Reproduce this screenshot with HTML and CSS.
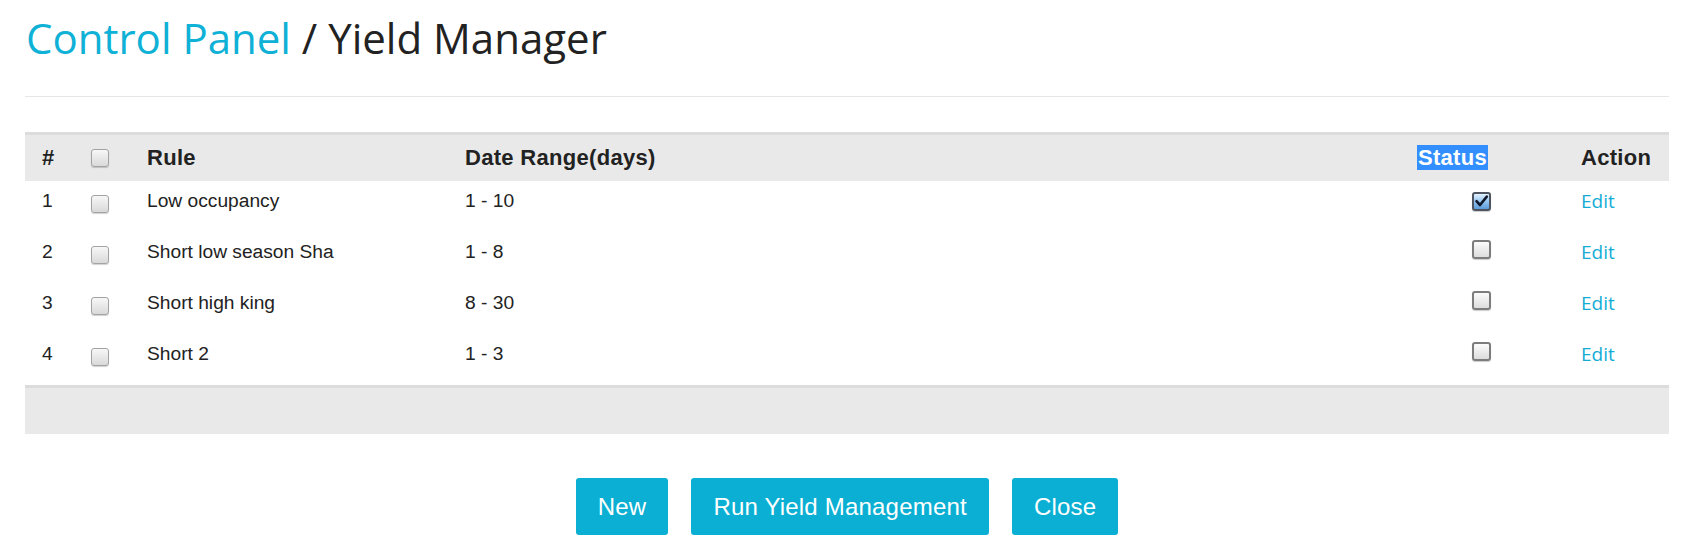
FILE: index.html
```html
<!DOCTYPE html>
<html lang="en">
<head>
<meta charset="utf-8">
<title>Yield Manager</title>
<link rel="stylesheet" href="styles.css">
</head>
<body>
<div class="page">
  <h1 class="title"><span class="crumb">Control Panel</span> / Yield Manager</h1>
  <hr class="divider">
  <table class="rules">
    <colgroup>
      <col class="w-num"><col class="w-sel"><col class="w-rule"><col class="w-range"><col class="w-status"><col class="w-action">
    </colgroup>
    <thead>
      <tr class="head">
        <th class="c-txt">#</th>
        <th class="c-txt"><span class="cb"></span></th>
        <th class="c-txt">Rule</th>
        <th class="c-txt">Date Range(days)</th>
        <th class="c-status"><span class="sel">Status</span></th>
        <th class="c-txt">Action</th>
      </tr>
    </thead>
    <tbody>
      <tr class="row">
        <td class="c-txt">1</td>
        <td class="c-txt"><span class="cb cb-row"></span></td>
        <td class="c-txt">Low occupancy</td>
        <td class="c-txt">1 - 10</td>
        <td class="c-status"><span class="sb sb-on"><svg viewBox="0 0 15 15" width="15" height="15"><path d="M2.5 7.2 L6 11 L12.8 2.6" fill="none" stroke="#10182a" stroke-width="2.6" stroke-linecap="round" stroke-linejoin="round"/></svg></span></td>
        <td class="c-txt"><a class="edit" href="#">Edit</a></td>
      </tr>
      <tr class="row">
        <td class="c-txt">2</td>
        <td class="c-txt"><span class="cb cb-row"></span></td>
        <td class="c-txt">Short low season Sha</td>
        <td class="c-txt">1 - 8</td>
        <td class="c-status"><span class="sb"></span></td>
        <td class="c-txt"><a class="edit" href="#">Edit</a></td>
      </tr>
      <tr class="row">
        <td class="c-txt">3</td>
        <td class="c-txt"><span class="cb cb-row"></span></td>
        <td class="c-txt">Short high king</td>
        <td class="c-txt">8 - 30</td>
        <td class="c-status"><span class="sb"></span></td>
        <td class="c-txt"><a class="edit" href="#">Edit</a></td>
      </tr>
      <tr class="row">
        <td class="c-txt">4</td>
        <td class="c-txt"><span class="cb cb-row"></span></td>
        <td class="c-txt">Short 2</td>
        <td class="c-txt">1 - 3</td>
        <td class="c-status"><span class="sb"></span></td>
        <td class="c-txt"><a class="edit" href="#">Edit</a></td>
      </tr>
    </tbody>
    <tfoot>
      <tr class="foot"><td colspan="6"></td></tr>
    </tfoot>
  </table>
  <div class="actions">
    <button class="btn" type="button">New</button>
    <button class="btn" type="button">Run Yield Management</button>
    <button class="btn" type="button">Close</button>
  </div>
</div>
</body>
</html>
```

FILE: styles.css
```css
html, body {
  margin: 0;
  padding: 0;
  background: #ffffff;
}

.page {
  padding: 0 26px 0 25px;
  font-family: "Liberation Sans", Arial, sans-serif;
  color: #222222;
}

.title {
  margin: 15px 0 0 1px;
  font-family: "Open Sans", "Noto Sans", sans-serif;
  font-weight: 400;
  font-size: 42px;
  line-height: 46px;
  color: #222222;
}

.crumb {
  color: #0fb1d6;
}

.divider {
  margin: 35px 0 0 0;
  border: 0;
  border-top: 1px solid #e6e6e6;
  height: 0;
}

.rules {
  width: 100%;
  margin-top: 35px;
  border-collapse: separate;
  border-spacing: 0;
  table-layout: fixed;
}

.w-num { width: 49px; }
.w-sel { width: 56px; }
.w-rule { width: 318px; }
.w-range { width: 932px; }
.w-status { width: 184px; }
.w-action { width: 105px; }

.head {
  height: 49px;
}

.head th {
  background: #e9e9e9;
  border-top: 3px solid #dcdcdc;
  font-size: 22px;
  font-weight: 700;
  letter-spacing: 0.3px;
  color: #222222;
  vertical-align: middle;
  padding-top: 0;
  padding-bottom: 0;
  line-height: 26px;
}

.c-txt {
  text-align: left;
  padding-left: 17px;
  padding-right: 0;
}

.c-status {
  text-align: right;
  padding-left: 0;
  padding-right: 76px;
}

.sel {
  background: #338fff;
  color: #ffffff;
  padding: 0 1px;
}

.row {
  height: 51px;
}

.row td {
  vertical-align: top;
  padding-top: 9px;
  padding-bottom: 0;
  font-size: 19.2px;
  line-height: 22px;
  color: #222222;
}

.cb {
  display: block;
  width: 16px;
  height: 16px;
  border: 1px solid #a3a3a3;
  border-radius: 3px;
  background: linear-gradient(#f7f7f7, #d9d9d9);
  box-shadow: 0 1px 1px rgba(0, 0, 0, 0.18);
}

.cb-row {
  margin-top: 5px;
}

.sb {
  display: inline-block;
  vertical-align: top;
  box-sizing: border-box;
  width: 19px;
  height: 19px;
  margin-right: -3px;
  margin-top: -1px;
  border: 2px solid #7c7c7c;
  border-radius: 3px;
  background: linear-gradient(#fbfbfb, #dcdcdc);
  box-shadow: 0 1px 1px rgba(0, 0, 0, 0.2);
}

.sb-on {
  margin-top: 2px;
  border-color: #4f5560;
  background: linear-gradient(#e4f2ff, #8cc0ee 55%, #5b9bd8);
}

.sb-on svg {
  display: block;
  margin: 0;
}

.edit {
  font-family: "Open Sans", "Noto Sans", sans-serif;
  font-size: 19px;
  color: #14acd5;
  text-decoration: none;
}

.foot td {
  height: 46px;
  padding: 0;
  background: #e9e9e9;
  border-top: 3px solid #dcdcdc;
}

.actions {
  display: flex;
  justify-content: center;
  gap: 23px;
  margin-top: 44px;
}

.btn {
  font-family: "Liberation Sans", Arial, sans-serif;
  font-size: 24px;
  line-height: 29px;
  letter-spacing: 0.2px;
  padding: 14px 22px;
  border: 0;
  border-radius: 3px;
  background: #0bafd3;
  color: #ffffff;
}
```
